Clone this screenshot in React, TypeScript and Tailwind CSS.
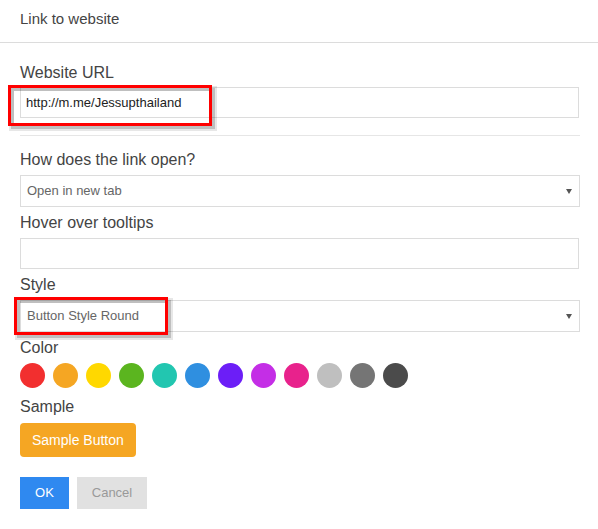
import React from "react";

// ── Palette ─────────────────────────────────────────────────────────────────

const colors = [
  "#f22f2f",
  "#f5a623",
  "#ffd800",
  "#5bb51f",
  "#22c6b0",
  "#2f8fe0",
  "#6c1ef7",
  "#c42ee6",
  "#e8228c",
  "#bfbfbf",
  "#757575",
  "#4b4b4b",
];

// ── Bits ────────────────────────────────────────────────────────────────────

function Field({ label, children }: { label: string; children: React.ReactNode }) {
  return (
    <div className="flex flex-col gap-[5px]">
      <div className="text-[16px] leading-[20px] text-[#444]">{label}</div>
      {children}
    </div>
  );
}

function Select({ value, children }: { value: string; children?: React.ReactNode }) {
  return (
    <div className="relative h-[32px] border border-[#dcdcdc] flex items-center justify-between pl-[6px] pr-[7px] text-[13px] text-[#666]">
      <span>{value}</span>
      <svg width="6" height="5" viewBox="0 0 6 5">
        <polygon points="0,0 6,0 3,5" fill="#555" />
      </svg>
      {children}
    </div>
  );
}

// red annotation frame lying over a field; a gray copy behind it fakes the shadow
function Highlight({ className }: { className: string }) {
  return (
    <div className={`pointer-events-none absolute ${className}`}>
      <div className="absolute left-[3px] top-[3px] -right-[3px] -bottom-[3px] border-[3px] border-[#00000040] outline-2 outline-[#00000018]" />
      <div className="absolute inset-0 border-[3px] border-[#ff0000]" />
    </div>
  );
}

// ── App ─────────────────────────────────────────────────────────────────────

export default function App() {
  return (
    <div className="w-[598px] h-[529px] bg-white font-['Liberation_Sans',Arial,sans-serif] overflow-hidden">
      {/* Header */}
      <div className="h-[43px] border-b border-[#dcdcdc] px-5 flex items-center pb-[4px]">
        <h3 className="text-[15px] text-[#444]">Link to website</h3>
      </div>

      <div className="w-[580px] pl-5 pt-[20px] flex flex-col">
        <Field label="Website URL">
          <div className="relative -mt-px w-[559px] h-[31px] border border-[#dcdcdc] flex items-center px-[5px] text-[13px] text-[#222]">
            http://m.me/Jessupthailand
            <Highlight className="-left-[13px] -top-[3px] w-[204px] h-[41px]" />
          </div>
        </Field>

        <div className="mt-[17px] mb-[14px] h-px bg-[#e6e6e6]" />

        <div className="flex flex-col gap-[6px]">
          <Field label="How does the link open?">
            <Select value="Open in new tab" />
          </Field>

          <Field label="Hover over tooltips">
            <div className="w-[559px] h-[31px] border border-[#dcdcdc]" />
          </Field>

          <Field label="Style">
            <Select value="Button Style Round">
              <Highlight className="-left-[7px] -top-[4px] w-[154px] h-[38px]" />
            </Select>
          </Field>

          <Field label="Color">
            <div className="flex gap-[8px]">
              {colors.map((c) => (
                <span key={c} className="w-[25px] h-[25px] rounded-full" style={{ background: c }} />
              ))}
            </div>
          </Field>
        </div>

        <div className="mt-[9px]">
          <Field label="Sample">
            <button className="self-start mt-px h-[34px] px-[12px] rounded-[4px] bg-[#f5a623] text-white text-[14px]">
              Sample Button
            </button>
          </Field>
        </div>

        {/* Actions */}
        <div className="mt-[20px] flex gap-[8px]">
          <button className="h-[32px] w-[49px] bg-[#2f89f0] text-white text-[13px]">OK</button>
          <button className="h-[32px] w-[70px] bg-[#e1e1e1] text-[#999] text-[13px]">Cancel</button>
        </div>
      </div>
    </div>
  );
}
